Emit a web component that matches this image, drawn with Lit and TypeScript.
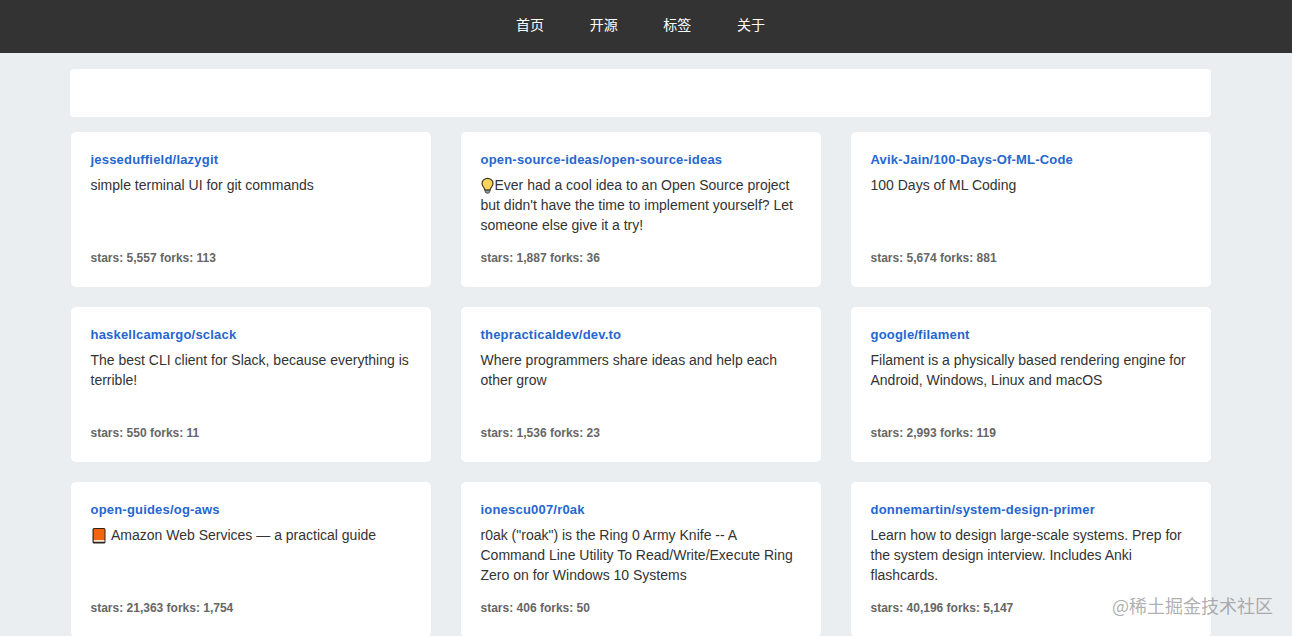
import { LitElement, html, css, svg } from 'lit';
import { customElement, property } from 'lit/decorators.js';

interface Repo {
  name: string;
  desc: string;
  icon?: 'bulb' | 'book';
  stars: string;
  forks: string;
}

const NAV_ITEMS = ['首页', '开源', '标签', '关于'];

const REPOS: Repo[] = [
  { name: 'jesseduffield/lazygit', desc: 'simple terminal UI for git commands', stars: '5,557', forks: '113' },
  {
    name: 'open-source-ideas/open-source-ideas',
    icon: 'bulb',
    desc: "Ever had a cool idea to an Open Source project but didn't have the time to implement yourself? Let someone else give it a try!",
    stars: '1,887',
    forks: '36',
  },
  { name: 'Avik-Jain/100-Days-Of-ML-Code', desc: '100 Days of ML Coding', stars: '5,674', forks: '881' },
  {
    name: 'haskellcamargo/sclack',
    desc: 'The best CLI client for Slack, because everything is terrible!',
    stars: '550',
    forks: '11',
  },
  {
    name: 'thepracticaldev/dev.to',
    desc: 'Where programmers share ideas and help each other grow',
    stars: '1,536',
    forks: '23',
  },
  {
    name: 'google/filament',
    desc: 'Filament is a physically based rendering engine for Android, Windows, Linux and macOS',
    stars: '2,993',
    forks: '119',
  },
  {
    name: 'open-guides/og-aws',
    icon: 'book',
    desc: 'Amazon Web Services — a practical guide',
    stars: '21,363',
    forks: '1,754',
  },
  {
    name: 'ionescu007/r0ak',
    desc: 'r0ak ("roak") is the Ring 0 Army Knife -- A Command Line Utility To Read/Write/Execute Ring Zero on for Windows 10 Systems',
    stars: '406',
    forks: '50',
  },
  {
    name: 'donnemartin/system-design-primer',
    desc: 'Learn how to design large-scale systems. Prep for the system design interview. Includes Anki flashcards.',
    stars: '40,196',
    forks: '5,147',
  },
];

const BULB = svg`
  <path d="M6.500 2.300C3.400 2.300 1 4.600 1 7.500c0 2.200 1.600 3.400 2.400 5.100.3.700.4 1.100.5 1.500h5.200c.1-.4.2-.8.5-1.500.8-1.700 2.400-2.900 2.400-5.100C12 4.600 9.600 2.300 6.500 2.300z" fill="#fdd35c" stroke="#3a3526" stroke-width="1.200"/>
  <path d="M4.200 14.200h4.600v1.900l-1 1h-2.600l-1-1z" fill="#8f9499" stroke="#3a3a3a" stroke-width=".8"/>`;

const BOOK = svg`
  <rect x="1.500" y="2" width="13" height="15.500" rx="1.500" fill="#2a2420"/>
  <rect x="2.700" y="3" width="10.800" height="11" fill="#f4640c"/>
  <rect x="2.700" y="14" width="10.800" height="1.800" fill="#f6e6d4"/>`;

@customElement('repo-card')
export class RepoCard extends LitElement {
  static styles = css`
    :host {
      display: block;
      height: 155px;
      box-sizing: border-box;
      padding: 20px 19.5px 0;
      background: #fff;
      border-radius: 5px;
      font-family: 'Liberation Sans', Arial, sans-serif;
    }

    .name {
      display: block;
      height: 15px;
      line-height: 15px;
      font-size: 13px;
      font-weight: 700;
      letter-spacing: 0.2px;
      color: #2566d0;
      text-decoration: none;
    }

    .desc {
      height: 60px;
      margin: 8px 0 0;
      font-size: 14px;
      line-height: 20px;
      color: #333;
    }

    .icon {
      width: 14px;
      height: 18px;
      vertical-align: -4px;
    }

    .icon.book {
      width: 15px;
      margin-right: 5.5px;
    }

    .stats {
      margin-top: 16px;
      font-size: 12px;
      line-height: 14px;
      font-weight: 700;
      color: #666;
    }
  `;

  @property({ type: Object })
  repo!: Repo;

  render() {
    const { name, desc, icon, stars, forks } = this.repo;
    return html`
      <a class="name" href="#">${name}</a>
      <p class="desc">
        ${icon === 'bulb' ? html`<svg class="icon" viewBox="0 0 14 18">${BULB}</svg>` : ''}${icon === 'book'
          ? html`<svg class="icon book" viewBox="0 0 15 18">${BOOK}</svg>`
          : ''}${desc}
      </p>
      <div class="stats">stars: ${stars} forks: ${forks}</div>
    `;
  }
}

@customElement('app-root')
export class AppRoot extends LitElement {
  static styles = css`
    :host {
      display: block;
      position: relative;
      height: 636px;
      overflow: hidden;
      background: #ebeef1;
    }

    .page {
      width: 1281px;
    }

    nav {
      display: flex;
      justify-content: center;
      gap: 17.6px;
      height: 53px;
      width: 1292px;
      box-sizing: border-box;
      padding-right: 11px;
      background: #333;
    }

    nav a {
      padding: 0 14px;
      font: 14px/48px 'Noto Sans CJK SC', sans-serif;
      color: #fff;
      text-decoration: none;
    }

    main {
      display: flex;
      flex-direction: column;
      width: 1141px;
      margin: 16px 0 0 70px;
    }

    .banner {
      height: 48px;
      background: #fff;
      border-radius: 4px;
    }

    .grid {
      display: grid;
      grid-template-columns: repeat(3, 360px);
      gap: 20px 30px;
      margin: 15px 0 0 1px;
    }

    .watermark {
      position: absolute;
      right: 19px;
      bottom: 19px;
      font: 18px/24px 'Noto Sans CJK SC', sans-serif;
      color: rgba(130, 130, 130, 0.65);
    }
  `;

  render() {
    return html`
      <div class="page">
        <nav>${NAV_ITEMS.map((item) => html`<a href="#">${item}</a>`)}</nav>
        <main>
          <div class="banner"></div>
          <div class="grid">${REPOS.map((repo) => html`<repo-card .repo=${repo}></repo-card>`)}</div>
        </main>
      </div>
      <div class="watermark">@稀土掘金技术社区</div>
    `;
  }
}
